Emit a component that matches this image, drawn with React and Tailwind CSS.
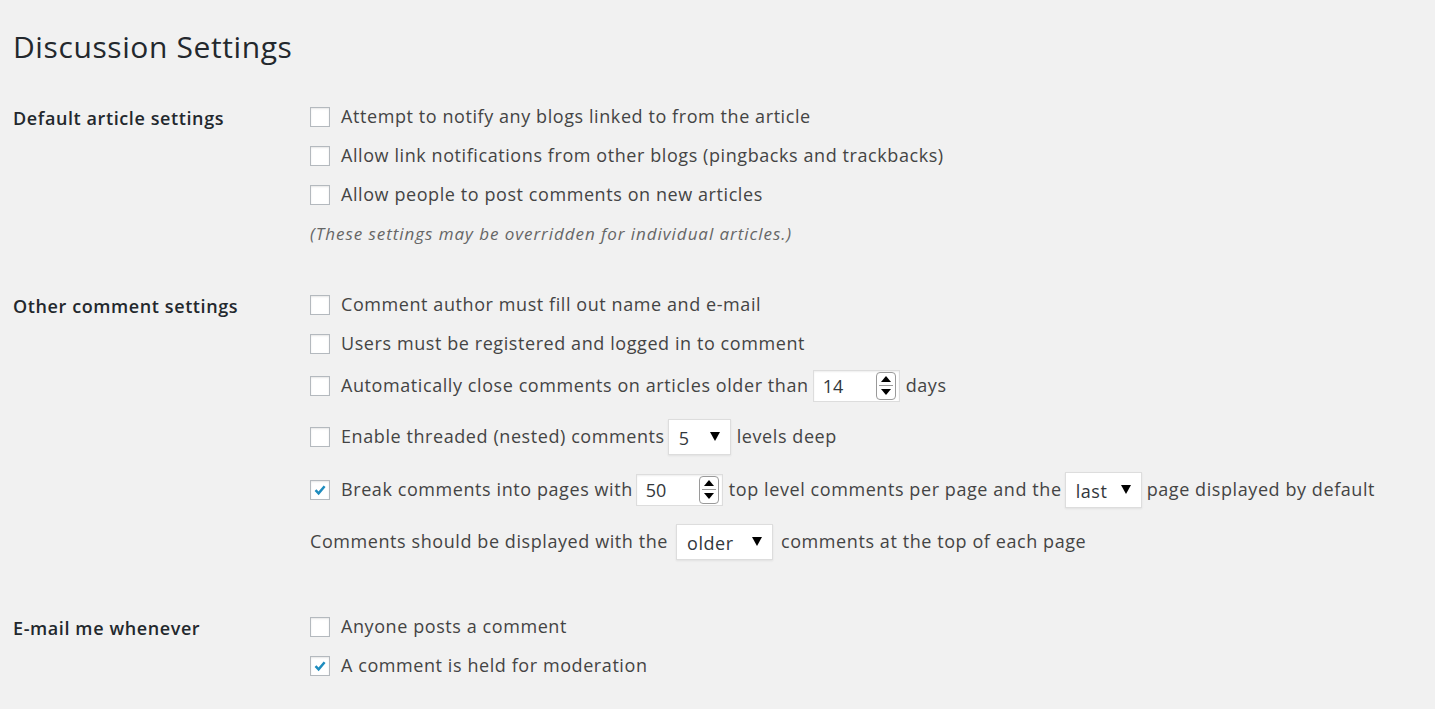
import React from 'react'

const font = { fontFamily: '"Open Sans", "Liberation Sans", sans-serif' }

function Checkbox({ checked }) {
  return (
    <span className="w-[20px] h-[20px] flex-shrink-0 bg-white border border-[#b4b9be] shadow-[inset_0_1px_2px_rgba(0,0,0,0.1)] flex items-center justify-center">
      {checked && (
        <svg width="14" height="14" viewBox="0 0 14 14">
          <path d="M2.5 7.2 L5.6 10.3 L11.6 3.2" fill="none" stroke="#1e8cbe" strokeWidth="2.5" />
        </svg>
      )}
    </span>
  )
}

function NumberInput({ value, className }) {
  return (
    <span className={`inline-flex items-center justify-between h-[32px] bg-white border border-[#ddd] shadow-[inset_0_1px_2px_rgba(0,0,0,0.07)] pl-[9px] pr-[3px] tracking-normal ${className}`}>
      <span className="text-[#32373c] pt-[2px]">{value}</span>
      <span className="w-[20px] h-[28px] border border-[#9a9a9a] rounded-[4px] flex flex-col items-center justify-center gap-[3px] bg-white">
        <span className="w-0 h-0 border-l-[5px] border-r-[5px] border-b-[6px] border-l-transparent border-r-transparent border-b-black" />
        <span className="w-[14px] h-px bg-[#9a9a9a]" />
        <span className="w-0 h-0 border-l-[5px] border-r-[5px] border-t-[6px] border-l-transparent border-r-transparent border-t-black" />
      </span>
    </span>
  )
}

function Select({ value, className }) {
  return (
    <span className={`inline-flex items-center justify-between h-[36px] bg-white border border-[#ddd] shadow-[0_1px_2px_rgba(0,0,0,0.07)] pl-[10px] pr-[10px] ${className}`}>
      <span className="text-[#32373c] pt-[4px]">{value}</span>
      <span className="w-0 h-0 border-l-[5px] border-r-[5px] border-t-[9px] border-l-transparent border-r-transparent border-t-black" />
    </span>
  )
}

function Row({ h, checked, noBox, children }) {
  return (
    <div className={`flex items-center ${h}`}>
      {!noBox && <Checkbox checked={checked} />}
      <div className={`flex items-center whitespace-nowrap ${noBox ? '' : 'ml-[11px]'}`}>{children}</div>
    </div>
  )
}

function Section({ label, children, className }) {
  return (
    <div className={`flex ${className}`}>
      <div className="w-[297px] flex-shrink-0 h-[39px] pt-[4px] flex items-center font-semibold text-[#23282d] tracking-[0.6px]">{label}</div>
      <div className="flex flex-col">{children}</div>
    </div>
  )
}

export default function App() {
  return (
    <div className="min-h-screen bg-[#f1f1f1] text-[#444] text-[18px] tracking-[0.58px] px-[13px] pt-[1px]" style={font}>
      <h1 className="pt-[27px] text-[30px] leading-[38px] tracking-[0.6px] text-[#23282d] font-normal">Discussion Settings</h1>

      <Section label="Default article settings" className="mt-[31px]">
        <Row h="h-[39px]">Attempt to notify any blogs linked to from the article</Row>
        <Row h="h-[39px]">Allow link notifications from other blogs (pingbacks and trackbacks)</Row>
        <Row h="h-[39px]">Allow people to post comments on new articles</Row>
        <div className="h-[40px] flex items-center italic text-[#666] text-[17px] tracking-[0.95px]">(These settings may be overridden for individual articles.)</div>
      </Section>

      <Section label="Other comment settings" className="mt-[31px]">
        <Row h="h-[39px]">Comment author must fill out name and e-mail</Row>
        <Row h="h-[39px]">Users must be registered and logged in to comment</Row>
        <Row h="h-[45px]">
          Automatically close comments on articles older than
          <NumberInput value="14" className="w-[87px] ml-[4px] mr-[6px]" />
          days
        </Row>
        <Row h="h-[57px]">
          Enable threaded (nested) comments
          <Select value="5" className="w-[63px] ml-[3px] mr-[6px]" />
          levels deep
        </Row>
        <Row h="h-[49px]" checked>
          Break comments into pages with
          <NumberInput value="50" className="w-[87px] ml-[3px] mr-[6px]" />
          top level comments per page and the
          <Select value="last" className="w-[77px] ml-[3px] mr-[5px]" />
          page displayed by default
        </Row>
        <Row h="h-[55px]" noBox>
          Comments should be displayed with the
          <Select value="older" className="w-[97px] ml-[8px] mr-[8px]" />
          comments at the top of each page
        </Row>
      </Section>

      <Section label="E-mail me whenever" className="mt-[38px]">
        <Row h="h-[39px]">Anyone posts a comment</Row>
        <Row h="h-[39px]" checked>A comment is held for moderation</Row>
      </Section>
    </div>
  )
}
